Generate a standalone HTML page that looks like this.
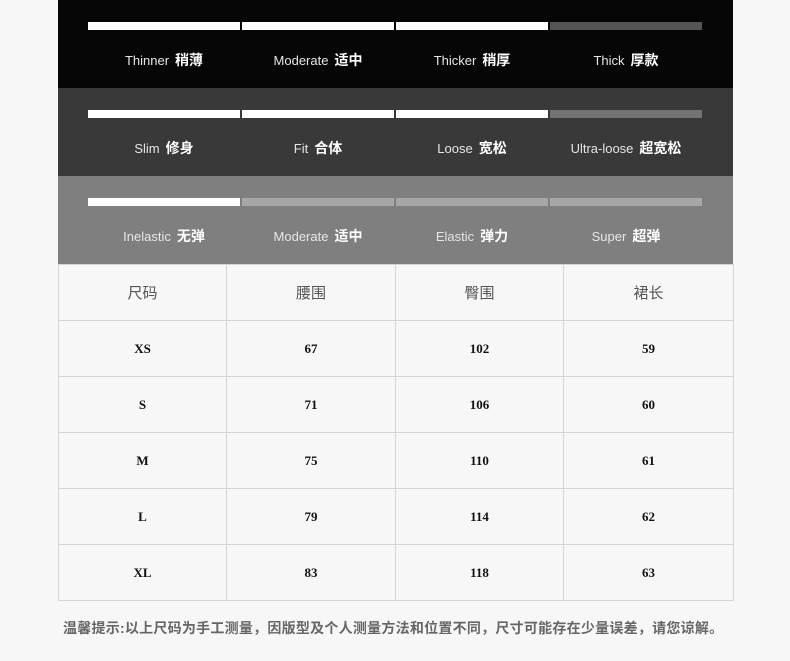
<!DOCTYPE html>
<html><head><meta charset="utf-8"><style>
body{margin:0;background:#f7f7f7;width:790px;height:661px;overflow:hidden;font-family:"Liberation Sans","Noto Sans CJK SC",sans-serif}
.band{position:absolute;left:58px;width:675px;height:88px}
.bar{position:absolute;top:22px;height:8px;width:152px}
.lab{position:absolute;top:50px;width:154px;text-align:center;font-size:13px;color:#e6e6e6;white-space:nowrap}
.lab b{color:#fff;font-size:14px;margin-left:6px}
table{position:absolute;left:58px;top:264px;border-collapse:collapse;background:#f7f7f7}
td{border:1px solid #d5d5d5;height:55px;text-align:center;padding:0;font-family:"Liberation Serif","Noto Serif CJK SC",serif;font-weight:bold;font-size:13px;color:#111}
tr.h td{font-family:"Liberation Sans","Noto Sans CJK SC",sans-serif;font-weight:normal;font-size:15px;color:#555}
.foot{position:absolute;left:63px;top:618px;font-size:14px;font-weight:bold;color:#666;white-space:nowrap;letter-spacing:0.25px}
</style></head><body>
<div class="band" style="top:0;background:#060606">
<div class="bar" style="left:30px;background:#fff"></div><div class="bar" style="left:184px;background:#fff"></div><div class="bar" style="left:338px;background:#fff"></div><div class="bar" style="left:492px;background:#555"></div>
<div class="lab" style="left:29px">Thinner<b>稍薄</b></div><div class="lab" style="left:183px">Moderate<b>适中</b></div><div class="lab" style="left:337px">Thicker<b>稍厚</b></div><div class="lab" style="left:491px">Thick<b>厚款</b></div>
</div>
<div class="band" style="top:88px;background:#393939">
<div class="bar" style="left:30px;background:#fff"></div><div class="bar" style="left:184px;background:#fff"></div><div class="bar" style="left:338px;background:#fff"></div><div class="bar" style="left:492px;background:#737373"></div>
<div class="lab" style="left:29px">Slim<b>修身</b></div><div class="lab" style="left:183px">Fit<b>合体</b></div><div class="lab" style="left:337px">Loose<b>宽松</b></div><div class="lab" style="left:491px">Ultra-loose<b>超宽松</b></div>
</div>
<div class="band" style="top:176px;background:#7f7f7f">
<div class="bar" style="left:30px;background:#fff"></div><div class="bar" style="left:184px;background:#a6a6a6"></div><div class="bar" style="left:338px;background:#a6a6a6"></div><div class="bar" style="left:492px;background:#a6a6a6"></div>
<div class="lab" style="left:29px">Inelastic<b>无弹</b></div><div class="lab" style="left:183px">Moderate<b>适中</b></div><div class="lab" style="left:337px">Elastic<b>弹力</b></div><div class="lab" style="left:491px">Super<b>超弹</b></div>
</div>
<table>
<colgroup><col style="width:168px"><col style="width:169px"><col style="width:168px"><col style="width:170px"></colgroup>
<tr class="h"><td>尺码</td><td>腰围</td><td>臀围</td><td>裙长</td></tr>
<tr><td>XS</td><td>67</td><td>102</td><td>59</td></tr>
<tr><td>S</td><td>71</td><td>106</td><td>60</td></tr>
<tr><td>M</td><td>75</td><td>110</td><td>61</td></tr>
<tr><td>L</td><td>79</td><td>114</td><td>62</td></tr>
<tr><td>XL</td><td>83</td><td>118</td><td>63</td></tr>
</table>
<div class="foot">温馨提示:以上尺码为手工测量，因版型及个人测量方法和位置不同，尺寸可能存在少量误差，请您谅解。</div>
</body></html>
